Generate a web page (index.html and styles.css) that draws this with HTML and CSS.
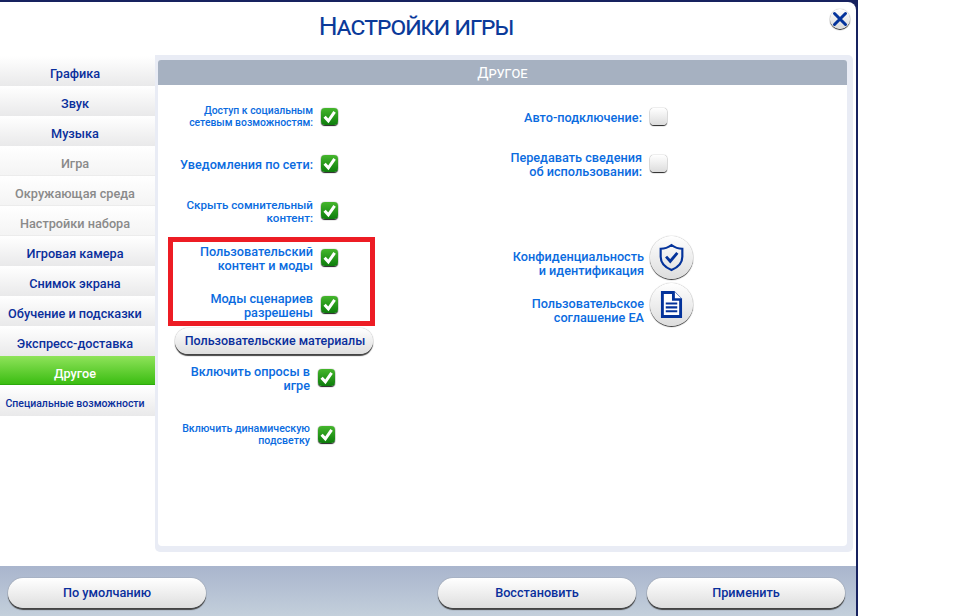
FILE: index.html
```html
<!DOCTYPE html>
<html lang="ru">
  <head>
    <meta charset="utf-8">
    <title>Настройки игры</title>
    <link rel="stylesheet" href="styles.css">
  </head>
  <body>
    <div class="window">
      <div class="title-bar">
        <div class="title">Настройки игры</div>
        <div class="close">
          <svg viewBox="0 0 20 20" width="20" height="20"><path d="M4.5 4.5 L15.5 15.5 M15.5 4.5 L4.5 15.5" stroke="#04339b" stroke-width="3" stroke-linecap="round"/></svg>
        </div>
      </div>

      <div class="middle">
        <div class="tabs">
          <div class="tab">Графика</div>
          <div class="tab">Звук</div>
          <div class="tab">Музыка</div>
          <div class="tab disabled">Игра</div>
          <div class="tab disabled">Окружающая среда</div>
          <div class="tab disabled">Настройки набора</div>
          <div class="tab">Игровая камера</div>
          <div class="tab">Снимок экрана</div>
          <div class="tab">Обучение и подсказки</div>
          <div class="tab">Экспресс-доставка</div>
          <div class="tab active">Другое</div>
          <div class="tab small">Специальные возможности</div>
        </div>

        <div class="panel">
          <div class="panel-inner">
            <div class="panel-header">Другое</div>
            <div class="columns">
              <div class="column-left">
                <div class="option"><span class="label tiny">Доступ к социальным<br>сетевым возможностям:</span><span class="check on"><svg viewBox="0 0 18 18"><path d="M3.8 9.2 L7.8 13.6 L14.4 4.2" fill="none" stroke="#fff" stroke-width="3.2"/></svg></span></div>
                <div class="option"><span class="label">Уведомления по сети:</span><span class="check on"><svg viewBox="0 0 18 18"><path d="M3.8 9.2 L7.8 13.6 L14.4 4.2" fill="none" stroke="#fff" stroke-width="3.2"/></svg></span></div>
                <div class="option"><span class="label small-label">Скрыть сомнительный<br>контент:</span><span class="check on"><svg viewBox="0 0 18 18"><path d="M3.8 9.2 L7.8 13.6 L14.4 4.2" fill="none" stroke="#fff" stroke-width="3.2"/></svg></span></div>
                <div class="option"><span class="label">Пользовательский<br>контент и моды</span><span class="check on"><svg viewBox="0 0 18 18"><path d="M3.8 9.2 L7.8 13.6 L14.4 4.2" fill="none" stroke="#fff" stroke-width="3.2"/></svg></span></div>
                <div class="option"><span class="label">Моды сценариев<br>разрешены</span><span class="check on"><svg viewBox="0 0 18 18"><path d="M3.8 9.2 L7.8 13.6 L14.4 4.2" fill="none" stroke="#fff" stroke-width="3.2"/></svg></span></div>
                <div class="highlight"></div>
                <div class="wide-button">Пользовательские материалы</div>
                <div class="option shifted"><span class="label">Включить опросы в<br>игре</span><span class="check on"><svg viewBox="0 0 18 18"><path d="M3.8 9.2 L7.8 13.6 L14.4 4.2" fill="none" stroke="#fff" stroke-width="3.2"/></svg></span></div>
                <div class="option shifted lower"><span class="label tiny">Включить динамическую<br>подсветку</span><span class="check on"><svg viewBox="0 0 18 18"><path d="M3.8 9.2 L7.8 13.6 L14.4 4.2" fill="none" stroke="#fff" stroke-width="3.2"/></svg></span></div>
              </div>

              <div class="column-right">
                <div class="option"><span class="label">Авто-подключение:</span><span class="check"></span></div>
                <div class="option"><span class="label">Передавать сведения<br>об использовании:</span><span class="check"></span></div>
                <div class="links">
                  <div class="link-row">
                    <span class="label link-label">Конфиденциальность<br>и идентификация</span>
                    <span class="round">
                      <svg viewBox="0 0 30 34" width="25" height="29"><path d="M15 2 C19 5 23 6.5 28 6.5 L28 16 C28 24 22 29 15 32 C8 29 2 24 2 16 L2 6.5 C7 6.5 11 5 15 2 Z" fill="none" stroke="#04339b" stroke-width="2.6"/><path d="M8.5 16 L13.5 21.5 L22 11.5" fill="none" stroke="#04339b" stroke-width="3.4"/></svg>
                    </span>
                  </div>
                  <div class="link-row">
                    <span class="label link-label">Пользовательское<br>соглашение EA</span>
                    <span class="round">
                      <svg viewBox="0 0 24 30" width="23" height="29"><path d="M1 1 L15 1 L23 9 L23 29 L1 29 Z" fill="#04339b"/><path d="M15.5 2 L22 8.5 L15.5 8.5 Z" fill="#fff"/><path d="M4 4 L12.5 4 L12.5 11 L20 11 L20 26 L4 26 Z" fill="#fff"/><path d="M6 14 H18 M6 18 H18 M6 22 H18" stroke="#04339b" stroke-width="2.2"/></svg>
                    </span>
                  </div>
                </div>
              </div>
            </div>
          </div>
        </div>
      </div>

      <div class="footer">
        <div class="button">По умолчанию</div>
        <div class="footer-right">
          <div class="button">Восстановить</div>
          <div class="button">Применить</div>
        </div>
      </div>
    </div>
  </body>
</html>
```

FILE: styles.css
```css
html, body {
  margin: 0;
  padding: 0;
  height: 100%;
  background-color: #ffffff;
  font-family: "Roboto", "Liberation Sans", sans-serif;
  overflow: hidden;
}
.window {
  width: 856px;
  height: 614px;
  display: flex;
  flex-direction: column;
  border-top: 2px solid #17225f;
  border-right: 2px solid #17225f;
  background-color: #17225f;
}
.title-bar {
  height: 52px;
  flex-shrink: 0;
  position: relative;
  display: flex;
  justify-content: center;
  align-items: center;
  background-color: #ffffff;
  border-top-right-radius: 8px;
}
.title {
  margin-left: -24px;
  margin-top: -6px;
  font-size: 26.5px;
  letter-spacing: -1px;
  font-weight: 400;
  font-variant: small-caps;
  color: #0b3a9a;
}
.close {
  position: absolute;
  right: 6px;
  top: 7px;
  width: 20px;
  height: 20px;
  border-radius: 50%;
  background: linear-gradient(#ffffff, #d9d9d9);
  box-shadow: 0 1px 1px #222, 0 0 1px #777;
}
.close svg {
  display: block;
}
.middle {
  flex: 1;
  display: flex;
  align-items: flex-start;
  background-color: #ffffff;
}
.tabs {
  width: 155px;
  margin-top: 2px;
}
.tab {
  height: 30px;
  line-height: 36px;
  padding-right: 5px;
  box-sizing: border-box;
  text-align: center;
  font-size: 12.7px;
  font-weight: 500;
  color: #0a2f9c;
  background: linear-gradient(#ffffff, #e9e9ea);
}
.tab.disabled {
  color: #8a8a8a;
  background: linear-gradient(#ffffff, #f4f4f4);
  border-bottom: 1px solid #ececec;
}
.tab.active {
  height: 29px;
  margin-bottom: 1px;
  color: #ffffff;
  background: linear-gradient(#8fe35a, #3bbd12);
  border-bottom: 1px solid #2ca80c;
}
.tab.small {
  font-size: 10.5px;
  background: linear-gradient(#ffffff, #e9e9ea);
}
.panel {
  width: 698px;
  height: 497px;
  margin-top: 1px;
  box-sizing: border-box;
  padding: 5px 6px 6px 3px;
  background-color: #e9ecf5;
  border-radius: 0 5px 5px 5px;
}
.panel-inner {
  height: 100%;
  background-color: #ffffff;
  border-radius: 4px;
}
.panel-header {
  height: 25px;
  line-height: 26px;
  text-align: center;
  font-size: 15px;
  font-variant: small-caps;
  color: #ffffff;
  background-color: #a6b1c1;
  border-radius: 3px 3px 0 0;
}
.columns {
  display: flex;
  padding-top: 8px;
}
.column-left {
  width: 180px;
  position: relative;
}
.column-right {
  width: 509px;
}
.option {
  height: 47px;
  display: flex;
  align-items: center;
  justify-content: flex-end;
  gap: 8px;
}
.label {
  padding-top: 2px;
  text-align: right;
  font-size: 12.7px;
  line-height: 14px;
  font-weight: 500;
  color: #0a6be0;
}
.label.tiny {
  padding-top: 0;
  font-size: 10.4px;
  line-height: 12px;
}
.label.small-label {
  font-size: 11.6px;
  line-height: 12.8px;
}
.check {
  width: 17px;
  height: 17px;
  flex-shrink: 0;
  border-radius: 4px;
  background: linear-gradient(#ffffff, #dcdcdc);
  box-shadow: 0 1px 1px #222, 0 0 1px #555;
}
.check.on {
  background: linear-gradient(#45b62c, #0d7d0c);
}
.check svg {
  display: block;
}
.highlight {
  position: absolute;
  left: 10px;
  top: 144px;
  width: 207px;
  height: 89px;
  border: 5px solid #ed1c24;
  box-sizing: border-box;
}
.wide-button {
  width: 198px;
  height: 26px;
  line-height: 25px;
  margin: -0.5px 0 0 17px;
  padding-left: 2px;
  box-sizing: border-box;
  text-align: center;
  font-size: 12.5px;
  font-weight: 500;
  color: #0a2f9c;
  white-space: nowrap;
  border-radius: 13px;
  background: linear-gradient(#ffffff, #dedede);
  box-shadow: 0 2px 1px #444, 0 0 1px #666;
}
.option.shifted {
  width: 177px;
  gap: 8px;
}
.option.shifted .label {
  padding-top: 4px;
}
.option.shifted .label.tiny {
  padding-top: 2px;
  font-size: 10.6px;
}
.option.lower {
  margin-top: 10px;
}
.column-right .option {
  width: 329px;
}
.links {
  margin-top: 47px;
  width: 355px;
}
.link-row {
  height: 47px;
  display: flex;
  align-items: center;
  justify-content: flex-end;
  gap: 6px;
}
.label.link-label {
  padding-top: 12px;
}
.round {
  width: 43px;
  height: 43px;
  flex-shrink: 0;
  display: flex;
  align-items: center;
  justify-content: center;
  border-radius: 50%;
  background: linear-gradient(#ffffff, #dddddd);
  box-shadow: 0 1px 1px #333, 0 0 1px #777;
}
.footer {
  flex-shrink: 0;
  height: 50px;
  box-sizing: border-box;
  padding: 12px 11px 7px 8px;
  display: flex;
  justify-content: space-between;
  background: linear-gradient(#a9b5cd, #c3cfdb);
}
.footer-right {
  display: flex;
  gap: 11px;
}
.button {
  width: 198px;
  height: 30px;
  line-height: 30px;
  text-align: center;
  font-size: 12.7px;
  font-weight: 500;
  color: #0a2f9c;
  border-radius: 15px;
  background: linear-gradient(#ffffff, #dedede);
  box-shadow: 0 2px 1px #444, 0 0 1px #666;
}
```
